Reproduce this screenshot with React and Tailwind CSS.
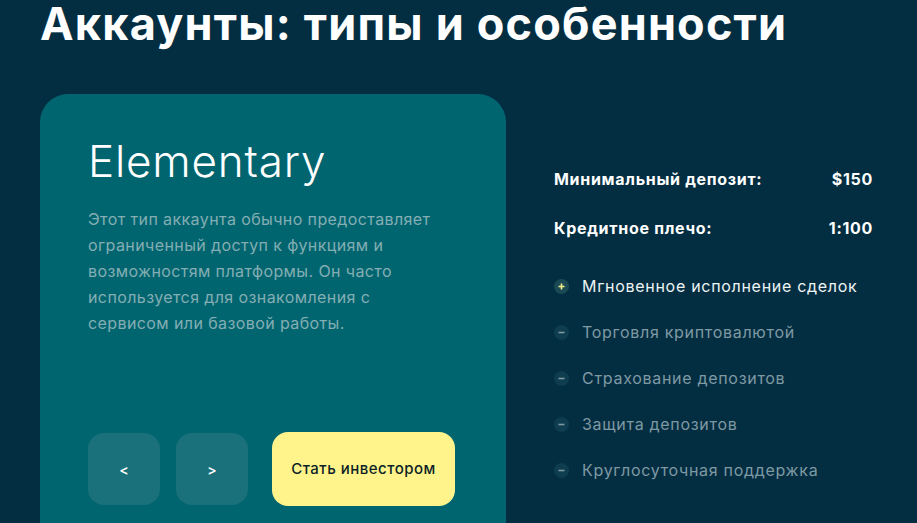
import React from "react";

const features = [
  { label: "Мгновенное исполнение сделок", active: true },
  { label: "Торговля криптовалютой", active: false },
  { label: "Страхование депозитов", active: false },
  { label: "Защита депозитов", active: false },
  { label: "Круглосуточная поддержка", active: false },
];

const FeatureIcon = ({ active }) => (
  <span
    className={`flex h-[15px] w-[15px] shrink-0 items-center justify-center rounded-full ${
      active ? "bg-[#1b4a55]" : "bg-[#0d3d4e]"
    }`}
  >
    {active ? (
      <svg width="7" height="7" viewBox="0 0 7 7">
        <path d="M3.5 0.5v6M0.5 3.5h6" stroke="#f3ec8a" strokeWidth="1.6" />
      </svg>
    ) : (
      <svg width="7" height="7" viewBox="0 0 7 7">
        <path d="M0.5 3.5h6" stroke="#7f99a3" strokeWidth="1.6" />
      </svg>
    )}
  </span>
);

const App = () => {
  return (
    <div className="min-h-screen overflow-hidden bg-[#032e42] font-['Inter',sans-serif]">
      <div className="px-10 pt-[1px]">
        <h1 className="text-[45px] font-bold leading-[46px] tracking-[1.2px] text-white">
          Аккаунты: типы и особенности
        </h1>

        <div className="mt-[47px] flex gap-12">
          {/* account card */}
          <div className="w-[466px] shrink-0 rounded-[28px] bg-[#016570] px-12 pb-12 pt-[39px]">
            <h2 className="text-[44px] font-light leading-[56px] tracking-[0.8px] text-white">
              Elementary
            </h2>
            <p className="mt-[17px] text-[16px] leading-[26px] tracking-[0.4px] text-[#84aeb3]">
              Этот тип аккаунта обычно предоставляет
              <br />
              ограниченный доступ к функциям и
              <br />
              возможностям платформы. Он часто
              <br />
              используется для ознакомления с
              <br />
              сервисом или базовой работы.
            </p>

            <div className="mt-[96px] flex items-center">
              <button className="flex h-[72px] w-[72px] items-center justify-center rounded-2xl bg-[#1a717c] text-[14px] font-semibold text-white">
                &lt;
              </button>
              <button className="ml-4 flex h-[72px] w-[72px] items-center justify-center rounded-2xl bg-[#1a717c] text-[14px] font-semibold text-white">
                &gt;
              </button>
              <button className="ml-6 flex h-[74px] w-[183px] items-center justify-center rounded-2xl bg-[#fff38c] text-[15px] font-medium tracking-[0.5px] text-[#0b1f26]">
                Стать инвестором
              </button>
            </div>
          </div>

          {/* details */}
          <div className="w-[319px] pt-[68px]">
            <div className="flex items-center justify-between text-[16px] font-bold leading-[34px] tracking-[0.7px] text-white">
              <span>Минимальный депозит:</span>
              <span>$150</span>
            </div>
            <div className="mt-[15px] flex items-center justify-between text-[16px] font-bold leading-[34px] tracking-[0.7px] text-white">
              <span>Кредитное плечо:</span>
              <span>1:100</span>
            </div>

            <ul className="mt-[29px] flex flex-col gap-[22px]">
              {features.map((f) => (
                <li
                  key={f.label}
                  className="flex items-center gap-[13px] text-[16px] leading-[24px] tracking-[0.7px]"
                >
                  <FeatureIcon active={f.active} />
                  <span className={f.active ? "text-[#eef3f4]" : "text-[#7f99a3]"}>
                    {f.label}
                  </span>
                </li>
              ))}
            </ul>
          </div>
        </div>
      </div>
    </div>
  );
};

export default App;
